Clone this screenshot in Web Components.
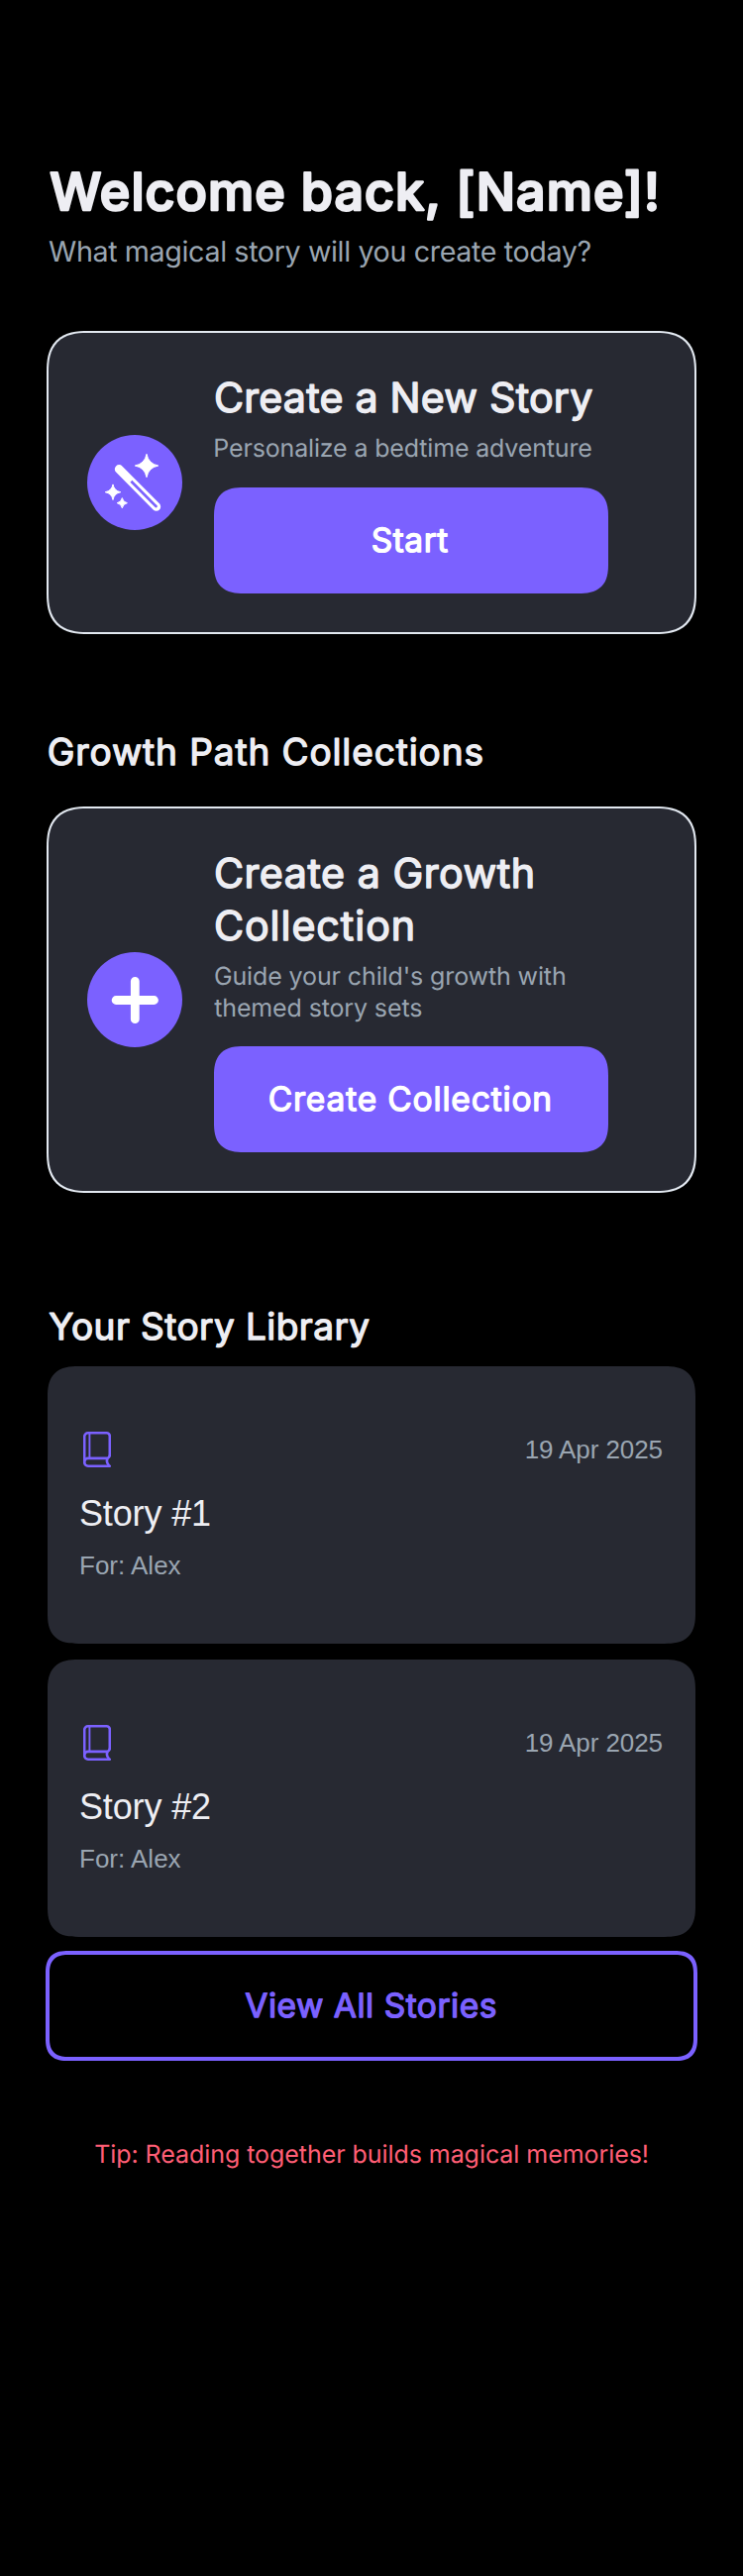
<!DOCTYPE html>
<html lang="en">
<head>
<meta charset="utf-8">
<title>Story Home</title>
<style>
  html, body { margin: 0; background: #000; }
  body { font-family: Inter, "Liberation Sans", sans-serif; color: #eeeef3; }
</style>
</head>
<body>
<story-home></story-home>
<script>
const define = (name, html, setup) => customElements.define(name, class extends HTMLElement {
  connectedCallback() {
    if (this.shadowRoot) return;
    const root = this.attachShadow({ mode: 'open' });
    root.innerHTML = html;
    if (setup) setup(this, root);
  }
});

/* A line of type with soft, rounded stroke ends, tracked to a given ink width. */
const pen = document.createElement('canvas').getContext('2d');
pen.textRendering = 'geometricPrecision';
define('soft-line', `
  <style>
    :host { display: block; }
    svg { display: block; width: 100%; overflow: visible; }
    text { font-family: Inter, "Liberation Sans", sans-serif; fill: currentColor; stroke: currentColor; stroke-linejoin: round; white-space: pre; text-rendering: geometricPrecision; }
  </style>
  <svg><text></text></svg>`, (el, root) => {
  const num = (k, d = 0) => parseFloat(el.getAttribute(k) ?? d);
  const size = num('size'), weight = num('weight', 400), stroke = num('stroke'), lead = num('lead'), ink = num('ink');
  const str = el.getAttribute('text');
  const svg = root.querySelector('svg'), t = root.querySelector('text');
  pen.font = `${weight} ${size}px Inter`;
  const m = pen.measureText(str);
  const natural = m.actualBoundingBoxLeft + m.actualBoundingBoxRight + stroke;
  svg.style.height = lead + 'px';
  t.textContent = str;
  t.style.fontSize = size + 'px';
  t.style.fontWeight = weight;
  if (stroke) t.style.strokeWidth = stroke; else t.style.stroke = 'none';
  t.style.letterSpacing = ((ink - natural) / (str.length - 1)).toFixed(3) + 'px';
  const start = el.hasAttribute('center') ? (svg.getBoundingClientRect().width - ink) / 2 : num('left');
  t.setAttribute('x', (start + m.actualBoundingBoxLeft + stroke / 2).toFixed(2));
  t.setAttribute('y', (lead / 2 + size * 0.3638).toFixed(2));
});

define('icon-disc', `
  <style>
    :host { display: block; flex: none; width: 96px; height: 96px; border-radius: 50%; background: #7b61ff; }
    svg { display: block; }
  </style>
  <svg width="96" height="96" viewBox="0 0 96 96"></svg>`, (el, root) => {
  const star = (x, y, r) => {
    const k = r * 0.16;
    return `<path fill="#fff" stroke="#fff" stroke-width="1" stroke-linejoin="round" d="M${x} ${y - r}Q${x + k} ${y - k} ${x + r} ${y}Q${x + k} ${y + k} ${x} ${y + r}Q${x - k} ${y + k} ${x - r} ${y}Q${x - k} ${y - k} ${x} ${y - r}Z"/>`;
  };
  root.querySelector('svg').innerHTML = el.getAttribute('icon') === 'plus'
    ? '<path d="M48.3 29.3V67.7M29.1 48.5H67.5" stroke="#fff" stroke-width="8.8" stroke-linecap="round"/>'
    : `<path d="M32.2 34.5L69.8 72.4" stroke="#fff" stroke-width="8.8" stroke-linecap="round"/>
       <path d="M44.4 46.7L69.3 71.9" stroke="#7b61ff" stroke-width="2.7"/><circle cx="69.5" cy="72.1" r="1.35" fill="#7b61ff"/>`
       + star(60, 31, 11.7) + star(26, 57.7, 7.8) + star(35.3, 68.7, 5.1);
});

define('action-button', `
  <style>
    :host { display: flex; align-items: center; box-sizing: border-box; width: 398px; height: 107px; padding-right: 2px;
      background: #7b61ff; color: #fff; border-radius: 24px; }
    :host([outline]) { width: auto; height: 111px; background: none; color: #7b61ff; border: 4px solid #7b61ff; border-radius: 18px; }
    ::slotted(*) { flex: 1; }
    @supports (corner-shape: superellipse(1.4)) {
      :host { border-radius: 30px; corner-shape: superellipse(1.4); }
      :host([outline]) { border-radius: 23px; }
    }
  </style>
  <slot></slot>`);

define('feature-card', `
  <style>
    :host { display: flex; align-items: center; gap: 32px; box-sizing: border-box; margin: 0 -1px; padding: 0 39px;
      background: #272932; border: 2px solid #e2e8f0; border-radius: 32px; }
    .body { flex: 1; min-width: 0; }
    .title { color: #eeeef3; }
    .desc { color: #9aa5b1; padding: 8.4px 0 23.6px; }
    @supports (corner-shape: superellipse(1.4)) {
      :host { border-radius: 42px; corner-shape: superellipse(1.4); }
    }
  </style>
  <slot name="icon"></slot>
  <div class="body">
    <div class="title"><slot name="title"></slot></div>
    <div class="desc"><slot name="desc"></slot></div>
    <slot name="action"></slot>
  </div>`);

define('story-card', `
  <style>
    :host { display: block; box-sizing: border-box; height: 280px; padding: 66px 32px 0; background: #272932; border-radius: 24px;
      font-family: "Liberation Sans", Arial, sans-serif; }
    .top { display: flex; justify-content: space-between; height: 36px; line-height: 36px; }
    svg { display: block; margin-left: 4px; }
    .meta { font-size: 26px; color: #9aa5b1; }
    .date { margin-right: 1px; letter-spacing: -0.08px; }
    .name { font-size: 36px; line-height: 44px; margin-top: 25px; color: #eeeef3; letter-spacing: -0.15px; }
    .who { line-height: 32px; margin-top: 14px; }
    @supports (corner-shape: superellipse(1.4)) {
      :host { border-radius: 31px; corner-shape: superellipse(1.4); }
    }
  </style>
  <div class="top">
    <svg width="28" height="36" viewBox="0 0 28 36" fill="none" stroke="#7b61ff" stroke-width="2.6">
      <path d="M26.8 23.8V4.6a3.3 3.3 0 0 0-3.3-3.3H4.9A3.7 3.7 0 0 0 1.2 5V31a3.7 3.7 0 0 0 3.7 3.7H26.8" stroke-linecap="round"/>
      <path d="M26.8 23.4a3.4 3.4 0 0 1-3.4 3.5H4.9A3.6 3.6 0 0 0 1.2 30.4M24.8 26.9q-2.3 3.6 1.3 7.4"/>
      <path d="M6.4 1.5V27" stroke-width="1.9"/>
    </svg>
    <span class="meta date"><slot name="date"></slot></span>
  </div>
  <div class="name"><slot name="name"></slot></div>
  <div class="meta who"><slot name="who"></slot></div>`);

define('story-home', `
  <style>
    :host { display: block; box-sizing: border-box; width: 750px; height: 2600px; padding: 159px 48px 0; background: #000; }
    .sub { margin-top: 8.5px; color: #9aa5b1; }
    .c1 { height: 306px; margin-top: 62.5px; }
    .h2 { margin-top: 94.8px; }
    .c2 { height: 390px; margin-top: 31.2px; }
    .h3 { margin-top: 110.6px; }
    .list { display: grid; gap: 16px; margin-top: 16.4px; }
    .all { margin: 14px -2px 0; }
    .tip { margin-top: 77.6px; color: #ff5e75; }
  </style>
  <soft-line text="Welcome back, [Name]!" size="52" weight="500" stroke="2.5" lead="68" left="2" ink="613"></soft-line>
  <soft-line class="sub" text="What magical story will you create today?" size="28.7" lead="36" left="1" ink="547.5"></soft-line>
  <feature-card class="c1">
    <icon-disc slot="icon" icon="wand"></icon-disc>
    <soft-line slot="title" text="Create a New Story" size="41.2" weight="400" stroke="1.4" lead="52.7" left="1.2" ink="381.7"></soft-line>
    <soft-line slot="desc" text="Personalize a bedtime adventure" size="25" lead="31.8" left="1.3" ink="380"></soft-line>
    <action-button slot="action"><soft-line text="Start" size="33.5" weight="400" stroke="1.3" lead="44" center ink="78"></soft-line></action-button>
  </feature-card>
  <soft-line class="h2" text="Growth Path Collections" size="37" weight="400" stroke="1.3" lead="48" left="1.1" ink="438"></soft-line>
  <feature-card class="c2">
    <icon-disc slot="icon" icon="plus"></icon-disc>
    <soft-line slot="title" text="Create a Growth" size="41.2" weight="400" stroke="1.4" lead="52.7" left="1.2" ink="321.2"></soft-line>
    <soft-line slot="title" text="Collection" size="41.2" weight="400" stroke="1.4" lead="52.7" left="1.2" ink="200.3"></soft-line>
    <soft-line slot="desc" text="Guide your child's growth with" size="25" lead="31.8" left="0.9" ink="353"></soft-line>
    <soft-line slot="desc" text="themed story sets" size="25" lead="31.8" left="0.2" ink="209"></soft-line>
    <action-button slot="action"><soft-line text="Create Collection" size="33.5" weight="400" stroke="1.3" lead="44" center ink="284"></soft-line></action-button>
  </feature-card>
  <soft-line class="h3" text="Your Story Library" size="37" weight="400" stroke="1.3" lead="48" left="0.6" ink="324.4"></soft-line>
  <div class="list">
    <story-card><span slot="date">19 Apr 2025</span><span slot="name">Story #1</span><span slot="who">For: Alex</span></story-card>
    <story-card><span slot="date">19 Apr 2025</span><span slot="name">Story #2</span><span slot="who">For: Alex</span></story-card>
  </div>
  <action-button class="all" outline><soft-line text="View All Stories" size="33.5" weight="400" stroke="1.3" lead="44" center ink="254.8"></soft-line></action-button>
  <soft-line class="tip" text="Tip: Reading together builds magical memories!" size="25" lead="32" center ink="557.6"></soft-line>`);
</script>
</body>
</html>
